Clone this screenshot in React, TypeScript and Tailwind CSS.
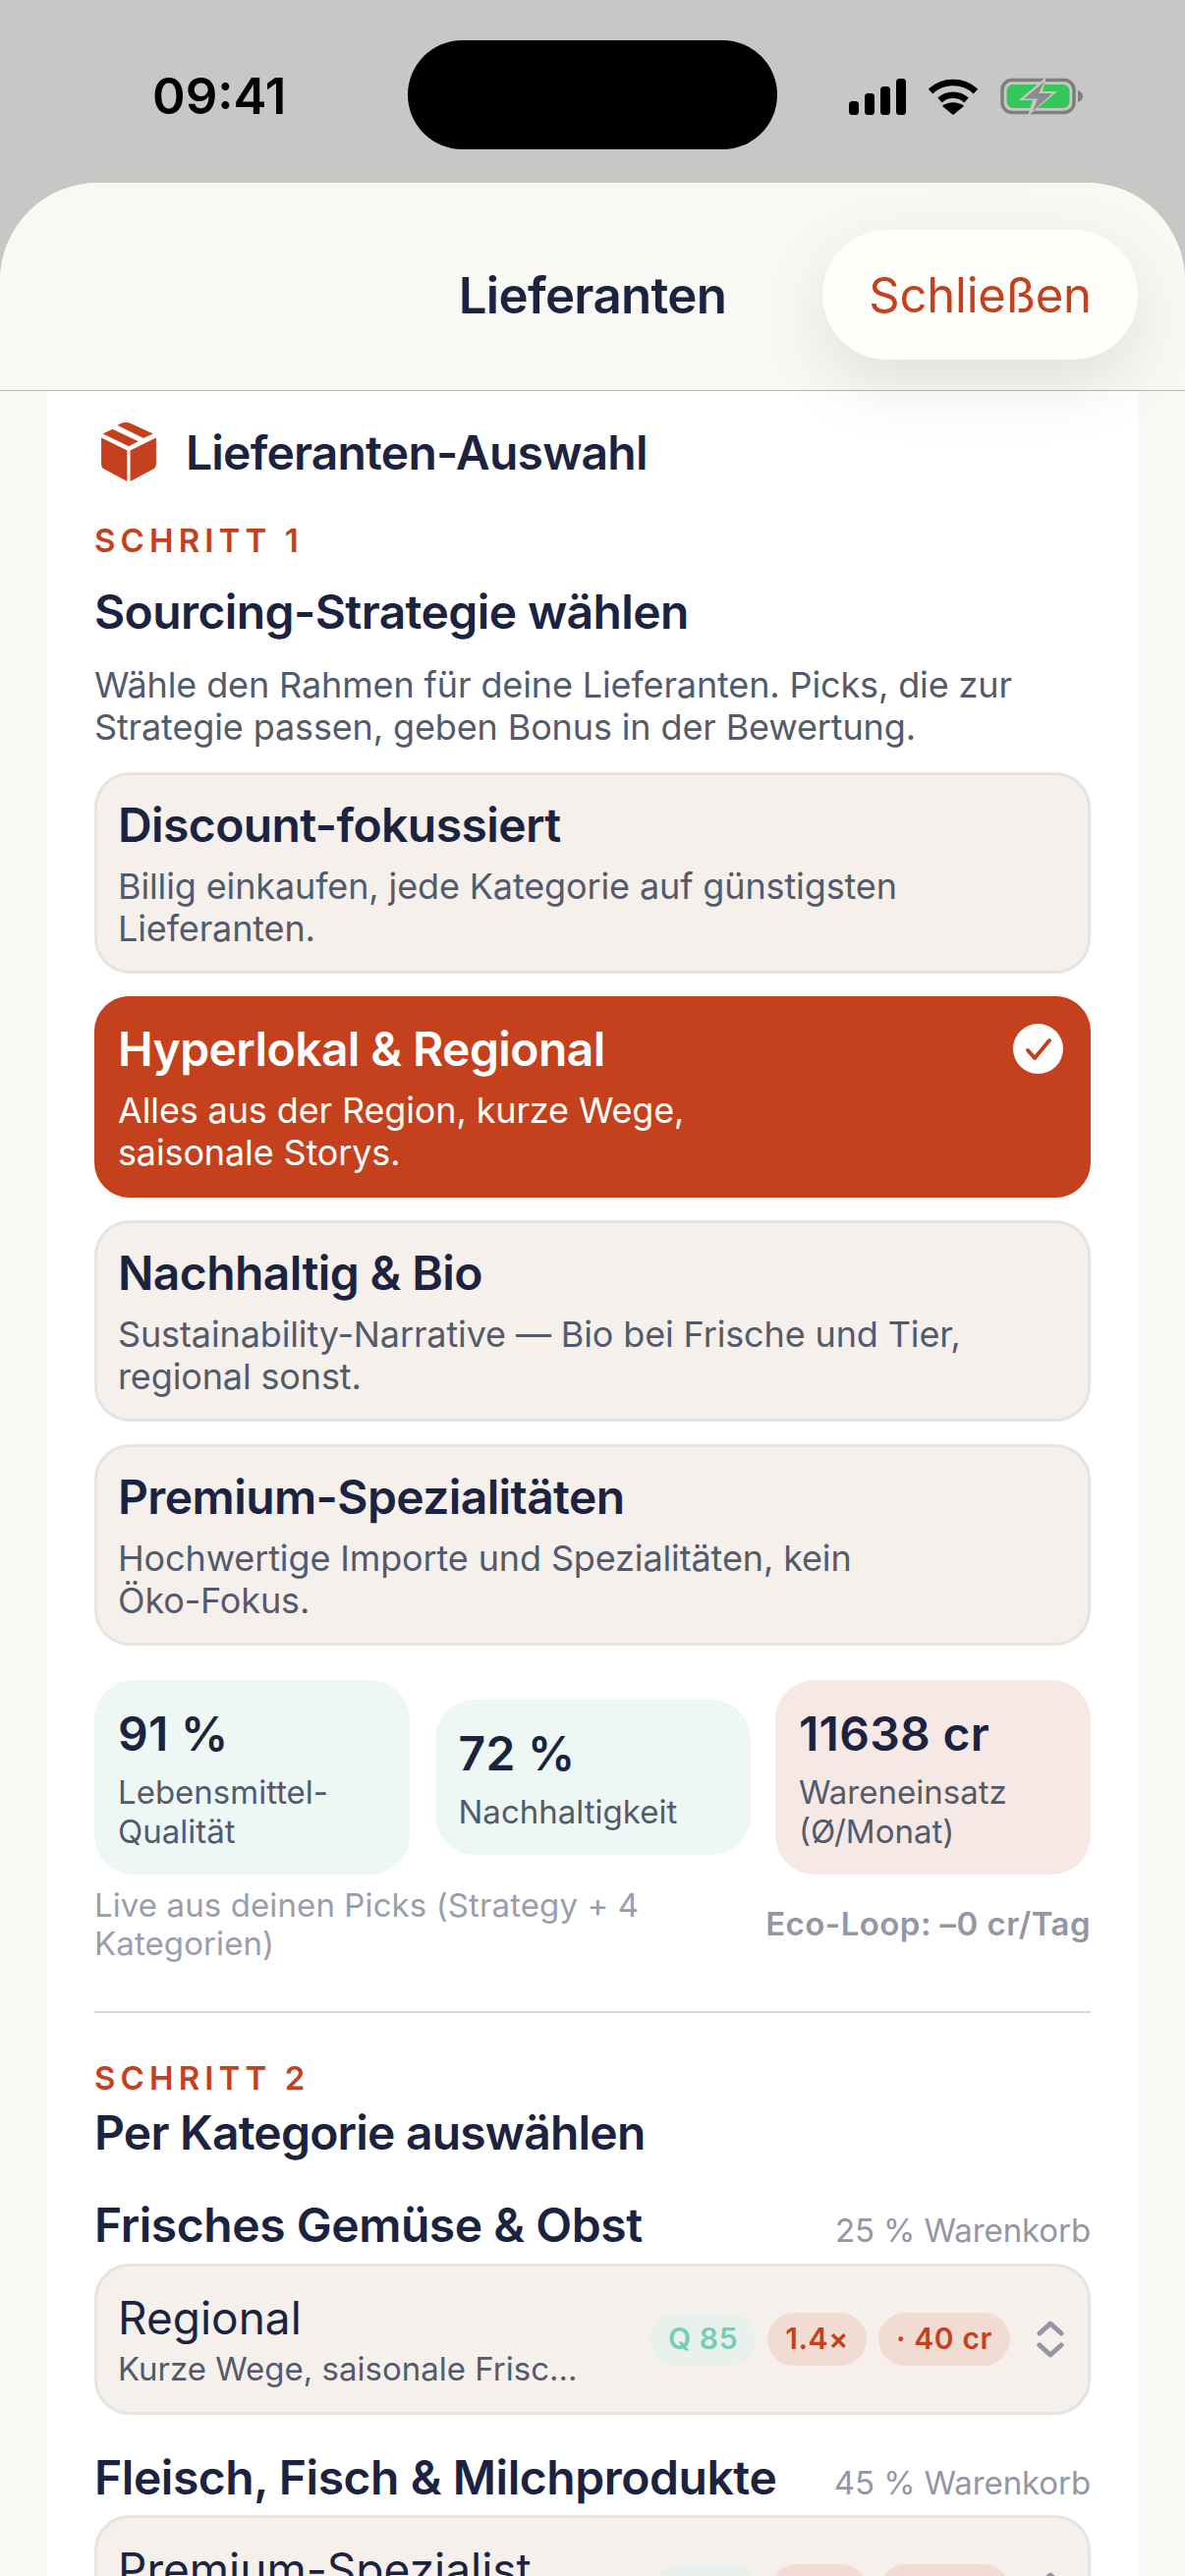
const font = { fontFamily: 'Inter, "Liberation Sans", sans-serif' };

function Signal() {
  return (
    <svg width="58" height="37" viewBox="0 0 58 37" fill="#000">
      <rect x="0" y="23" width="10" height="14" rx="3.5" />
      <rect x="16" y="15" width="10" height="22" rx="3.5" />
      <rect x="32" y="8" width="10" height="29" rx="3.5" />
      <rect x="48" y="0" width="10" height="37" rx="3.5" />
    </svg>
  );
}

function Wifi() {
  return (
    <svg width="52" height="37" viewBox="0 0 52 37" fill="none">
      <path d="M3 13 C16 1 36 1 49 13" stroke="#000" strokeWidth="6.5" strokeLinecap="butt" />
      <path d="M12.5 22 C20 15 32 15 39.5 22" stroke="#000" strokeWidth="6.5" strokeLinecap="butt" />
      <path d="M26 37 L15 28 C21 23 31 23 37 28 Z" fill="#000" />
    </svg>
  );
}

function Battery() {
  return (
    <svg width="84" height="40" viewBox="0 0 84 40" fill="none">
      <rect x="2" y="3.5" width="73" height="33" rx="10" stroke="#7f7f7f" strokeWidth="3.5" />
      <rect x="6.5" y="8" width="64" height="24" rx="6.5" fill="#34c759" />
      <path d="M79 14 C82 15 84 17 84 20 C84 23 82 25 79 26 Z" fill="#7f7f7f" />
      <path d="M47 0 L19 24 H33 L28 40 L58 15 H43 Z" fill="#c8c7c5" />
      <path d="M45 5 L24 22.5 H38 L33 35 L53 17 H39 Z" fill="#8b8b8b" />
    </svg>
  );
}

function Box() {
  return (
    <svg width="56" height="60" viewBox="0 0 54 58" fill="#c5401c">
      <path d="M19 1 C22 -0.5 26 -0.5 29 1 L51 11 L41.5 15.5 L16 3 Z" />
      <path d="M11 6.5 L36.5 18.5 L27 23.5 L1.5 11 Z" />
      <path d="M0 15 L25.5 27.5 V58 L3 46 C1 45 0 43 0 40 Z" />
      <path d="M54 15 V40 C54 43 53 45 51 46 L28.5 58 V27.5 Z" />
    </svg>
  );
}

function Chevrons() {
  return (
    <svg width="28" height="38" viewBox="0 0 28 38" fill="none" stroke="#9496a6" strokeWidth="5" strokeLinecap="round" strokeLinejoin="round">
      <path d="M3 13 L14 3 L25 13" />
      <path d="M3 25 L14 35 L25 25" />
    </svg>
  );
}

function Option({ title, sub, active }: { title: string; sub: React.ReactNode; active?: boolean }) {
  return (
    <div
      className={
        active
          ? "relative h-[205px] rounded-[36px] border-[3px] border-[#c5401c] bg-[#c5401c] pl-[21px] pr-[60px] pt-[22px] text-white"
          : "relative h-[205px] rounded-[36px] border-[3px] border-[#e4e4e4] bg-[#f5f0eb] pl-[21px] pr-[60px] pt-[22px]"
      }
    >
      <div className={active ? "text-[48px] font-semibold leading-[58px] tracking-[-0.6px] text-white" : "text-[48px] font-semibold leading-[58px] tracking-[-0.6px] text-[#1c2340]"}>{title}</div>
      <div className={active ? "mt-[12px] text-[36px] leading-[43px] tracking-[-0.13px] text-white" : "mt-[12px] text-[36px] leading-[43px] tracking-[-0.13px] text-[#535a6c]"}>{sub}</div>
      {active && (
        <div className="absolute right-[25px] top-[25px] flex h-[51px] w-[51px] items-center justify-center rounded-full bg-white">
          <svg width="28" height="24" viewBox="0 0 28 24" fill="none" stroke="#c5401c" strokeWidth="4" strokeLinecap="round" strokeLinejoin="round">
            <path d="M3 13 L10 21 L25 3" />
          </svg>
        </div>
      )}
    </div>
  );
}

function Stat({ value, label, warm }: { value: string; label: React.ReactNode; warm?: boolean }) {
  return (
    <div className={warm ? "w-[321px] rounded-[40px] bg-[#f6e8e4] px-[24px] pb-[24px] pt-[26px]" : "w-[321px] rounded-[40px] bg-[#edf8f5] px-[24px] pb-[24px] pt-[26px]"}>
      <div className="text-[48px] font-semibold leading-[58px] tracking-[0.3px] text-[#1c2340]">{value}</div>
      <div className="mt-[10px] text-[33px] leading-[40px] text-[#535a6c]">{label}</div>
    </div>
  );
}

function Badge({ children, kind }: { children: React.ReactNode; kind: "q" | "r" }) {
  return (
    <span
      className={
        kind === "q"
          ? "flex h-[54px] items-center rounded-full bg-[#e8f1ec] px-[18px] text-[30px] font-semibold tracking-[0.6px] text-[#74cdb9]"
          : "flex h-[54px] items-center rounded-full bg-[#f0dcd3] px-[18px] text-[30px] font-semibold tracking-[0.6px] text-[#c5401c]"
      }
    >
      {children}
    </span>
  );
}

function Select({ name, sub, q, f, c }: { name: string; sub: string; q: string; f: string; c: string }) {
  return (
    <div className="flex h-[154px] items-center rounded-[36px] border-[3px] border-[#e4e4e4] bg-[#f5f0eb] pl-[21px] pr-[24px]">
      <div className="w-[470px] min-w-0 shrink-0">
        <div className="text-[46px] leading-[56px] text-[#1c2340]">{name}</div>
        <div className="mt-[4px] truncate text-[33px] leading-[40px] text-[#535a6c]">{sub}</div>
      </div>
      <div className="ml-auto flex items-center gap-[12px]">
        <Badge kind="q">{q}</Badge>
        <Badge kind="r">{f}</Badge>
        <Badge kind="r">{c}</Badge>
        <span className="ml-[15px] flex">
          <Chevrons />
        </span>
      </div>
    </div>
  );
}

function CategoryHead({ name, share }: { name: string; share: string }) {
  return (
    <div className="flex items-baseline justify-between">
      <div className="text-[48px] font-semibold leading-[58px] tracking-[-0.45px] text-[#1c2340]">{name}</div>
      <div className="text-[33px] tracking-[-0.1px] text-[#9496a6]">{share}</div>
    </div>
  );
}

export default function App() {
  return (
    <div className="h-[2622px] w-[1206px] overflow-hidden bg-[#c8c7c5]" style={font}>
      <div className="flex h-[186px] items-start pl-[155px] pr-[104px] pt-[41px]">
        <div className="mt-[28px] w-[260px] text-[51px] font-semibold leading-[57px] text-black">09:41</div>
        <div className="h-[111px] w-[376px] rounded-full bg-black" />
        <div className="ml-auto mt-[37px] flex items-center gap-[22px]">
          <Signal />
          <Wifi />
          <Battery />
        </div>
      </div>

      <div className="h-[2436px] overflow-hidden rounded-t-[100px] bg-[#f9f8f5]">
        <div className="relative z-10 grid h-[212px] grid-cols-[1fr_auto_1fr] items-center border-b-[1.5px] border-[#b9b8b5] bg-[#f9f8f5] pt-[16px]">
          <div />
          <div className="pt-[3px] text-[51px] font-semibold tracking-[-0.7px] text-[#1c2340]">Lieferanten</div>
          <button className="mr-[48px] flex h-[132px] w-[321px] items-center justify-center justify-self-end rounded-full bg-[#fffefa] pt-[3px] text-[49px] tracking-[-0.2px] text-[#c5401c] shadow-[0_24px_70px_rgba(0,0,0,0.10)]">
            Schließen
          </button>
        </div>

        <div className="mx-[48px] bg-white px-[48px] pt-[32px]">
          <div className="flex items-center gap-[30px] pl-[7px]">
            <Box />
            <div className="pt-[2px] text-[48px] font-semibold leading-[58px] tracking-[-0.8px] text-[#1c2340]">Lieferanten-Auswahl</div>
          </div>

          <div className="mt-[40px] text-[33px] font-semibold leading-[40px] tracking-[5.1px] text-[#c5401c]">SCHRITT 1</div>
          <div className="mt-[24px] text-[48px] font-semibold leading-[58px] tracking-[-0.6px] text-[#1c2340]">Sourcing-Strategie wählen</div>
          <div className="mt-[24px] text-[36px] leading-[43px] tracking-[-0.13px] text-[#535a6c]">
            Wähle den Rahmen für deine Lieferanten. Picks, die zur
            <br />
            Strategie passen, geben Bonus in der Bewertung.
          </div>

          <div className="mt-[24px] flex flex-col gap-[23px]">
            <Option title="Discount-fokussiert" sub={<>Billig einkaufen, jede Kategorie auf günstigsten<br />Lieferanten.</>} />
            <Option active title="Hyperlokal & Regional" sub={<>Alles aus der Region, kurze Wege,<br />saisonale Storys.</>} />
            <Option title="Nachhaltig & Bio" sub={<>Sustainability-Narrative — Bio bei Frische und Tier,<br />regional sonst.</>} />
            <Option title="Premium-Spezialitäten" sub={<>Hochwertige Importe und Spezialitäten, kein<br />Öko-Fokus.</>} />
          </div>

          <div className="mt-[35px] flex items-center justify-between">
            <Stat value="91 %" label={<>Lebensmittel-<br />Qualität</>} />
            <Stat value="72 %" label="Nachhaltigkeit" />
            <Stat warm value="11638 cr" label={<>Wareneinsatz<br />(Ø/Monat)</>} />
          </div>

          <div className="mt-[12px] flex items-center justify-between">
            <div className="text-[33px] leading-[39px] tracking-[0.1px] text-[#9a9dab]">
              Live aus deinen Picks (Strategy + 4
              <br />
              Kategorien)
            </div>
            <div className="text-[33px] font-semibold tracking-[0.45px] text-[#9496a6]">Eco-Loop: –0 cr/Tag</div>
          </div>

          <div className="mt-[49px] h-[2px] bg-[#d9d9dc]" />

          <div className="mt-[46px] text-[33px] font-semibold leading-[40px] tracking-[5.1px] text-[#c5401c]">SCHRITT 2</div>
          <div className="mt-[7px] text-[48px] font-semibold leading-[58px] tracking-[-0.8px] text-[#1c2340]">Per Kategorie auswählen</div>

          <div className="mt-[36px]">
            <CategoryHead name="Frisches Gemüse & Obst" share="25 % Warenkorb" />
          </div>
          <div className="mt-[8px]">
            <Select name="Regional" sub="Kurze Wege, saisonale Frische und lokale Höfe" q="Q 85" f="1.4×" c="· 40 cr" />
          </div>

          <div className="mt-[35px]">
            <CategoryHead name="Fleisch, Fisch & Milchprodukte" share="45 % Warenkorb" />
          </div>
          <div className="mt-[8px]">
            <Select name="Premium-Spezialist" sub="Hochwertige Ware und Spezialitäten" q="Q 92" f="1.6×" c="· 60 cr" />
          </div>
        </div>
      </div>
    </div>
  );
}
